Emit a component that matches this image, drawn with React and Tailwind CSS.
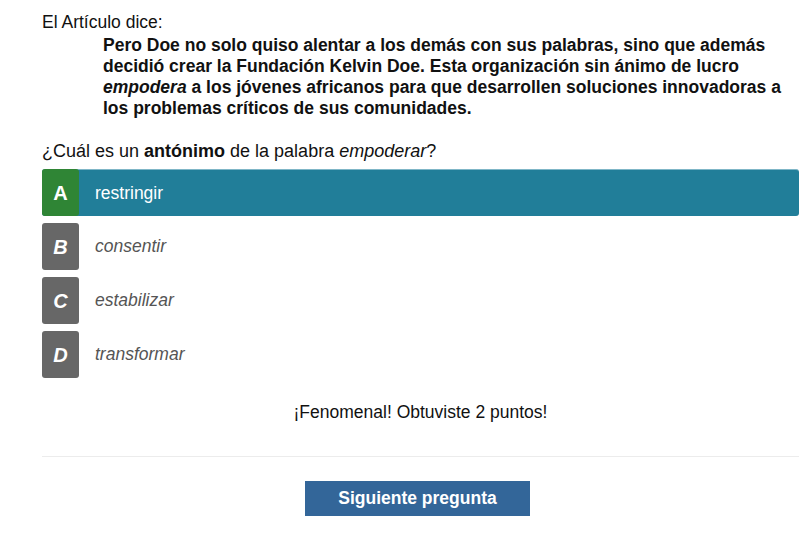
import React from 'react';

const options = [
  { letter: 'A', text: 'restringir', correct: true },
  { letter: 'B', text: 'consentir' },
  { letter: 'C', text: 'estabilizar' },
  { letter: 'D', text: 'transformar' },
];

const Option = ({ letter, text, correct }) => {
  if (correct) {
    return (
      <div className="flex h-[47px] items-center rounded-[3px] bg-[#217e99] border-t border-[#7fb6c7]">
        <div className="flex h-[47px] w-[37px] items-center justify-center rounded-[3px] bg-[#2f8535] text-[20px] font-bold text-white -mt-px">
          {letter}
        </div>
        <span className="ml-[16px] text-[17.5px] text-white">{text}</span>
      </div>
    );
  }
  return (
    <div className="flex h-[47px] items-center">
      <div className="flex h-[47px] w-[37px] items-center justify-center rounded-[3px] bg-[#676767] text-[20px] font-bold italic text-white">
        {letter}
      </div>
      <span className="ml-[16px] text-[17.5px] italic text-[#555]">{text}</span>
    </div>
  );
};

export default function App() {
  return (
    <div className="h-[540px] w-[806px] bg-white pl-[42px] pr-[7px] pt-[12px] font-['Liberation_Sans',Arial,sans-serif] text-[#111]">
      <p className="text-[17.5px] leading-[21px]">El Artículo dice:</p>
      <blockquote className="mt-[2px] ml-[61px] pr-[12px] text-[17.5px] font-bold leading-[21px]">
        Pero Doe no solo quiso alentar a los demás con sus palabras, sino que además decidió crear la Fundación Kelvin Doe. Esta organización sin ánimo de lucro <em>empodera</em> a los jóvenes africanos para que desarrollen soluciones innovadoras a los problemas críticos de sus comunidades.
      </blockquote>
      <p className="mt-[22px] text-[18px] leading-[21px]">
        ¿Cuál es un <strong>antónimo</strong> de la palabra <em>empoderar</em>?
      </p>
      <div className="mt-[7px] flex flex-col gap-[7px]">
        {options.map((o) => (
          <Option key={o.letter} {...o} />
        ))}
      </div>
      <p className="mt-[24px] text-center text-[17.5px] leading-[21px]">¡Fenomenal! Obtuviste 2 puntos!</p>
      <hr className="mt-[33px] border-t border-[#ececec]" />
      <button className="ml-[263px] mt-[24px] flex h-[35px] w-[225px] items-center justify-center bg-[#336699] text-[17.5px] font-bold text-white">
        Siguiente pregunta
      </button>
    </div>
  );
}
